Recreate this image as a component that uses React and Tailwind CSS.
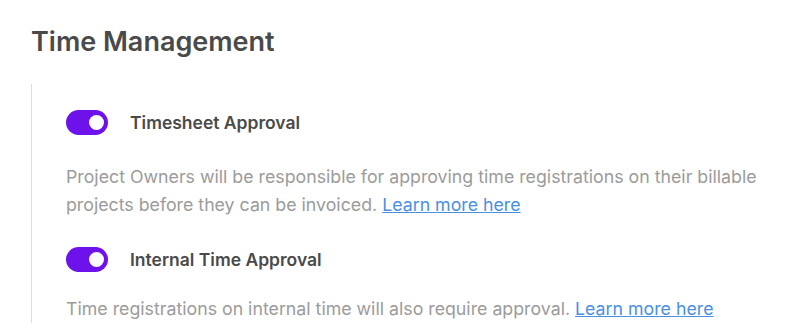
import React, { useState } from 'react';

const Toggle = ({ on, onChange }) => (
  <button
    onClick={onChange}
    className={`relative w-[42px] h-[25px] rounded-full shrink-0 transition-colors ${
      on ? 'bg-[#6d12ea]' : 'bg-gray-300'
    }`}
  >
    <span
      className={`absolute top-[5px] w-[15px] h-[15px] rounded-full bg-white transition-all ${
        on ? 'right-[4px]' : 'left-[4px]'
      }`}
    />
  </button>
);

const Setting = ({ title, gap, children }) => {
  const [on, setOn] = useState(true);
  return (
    <div>
      <div className="flex items-center gap-[22px]">
        <Toggle on={on} onChange={() => setOn(!on)} />
        <span className="text-[17.5px] font-semibold text-[#4a4a4a] leading-[25px]">{title}</span>
      </div>
      <p className={`${gap} text-[17.75px] leading-[28px] text-[#9b9b9b]`}>{children}</p>
    </div>
  );
};

export default function App() {
  return (
    <div className="bg-white min-h-screen px-[31px] pt-[24px] font-['Inter',sans-serif]">
      <h1 className="text-[27px] font-semibold text-[#4a4a4a] leading-[36px]">Time Management</h1>
      <div className="mt-[24px] border-l border-[#dcdce4] pl-[34px] pt-[26px] flex flex-col gap-[28px]">
        <Setting title="Timesheet Approval" gap="mt-[28px]">
          Project Owners will be responsible for approving time registrations on their billable
          <br />
          projects before they can be invoiced.{' '}
          <a href="#" className="text-[#4a90e2] underline">Learn more here</a>
        </Setting>
        <Setting title="Internal Time Approval" gap="mt-[23px]">
          Time registrations on internal time will also require approval.{' '}
          <a href="#" className="text-[#4a90e2] underline">Learn more here</a>
        </Setting>
      </div>
    </div>
  );
}
